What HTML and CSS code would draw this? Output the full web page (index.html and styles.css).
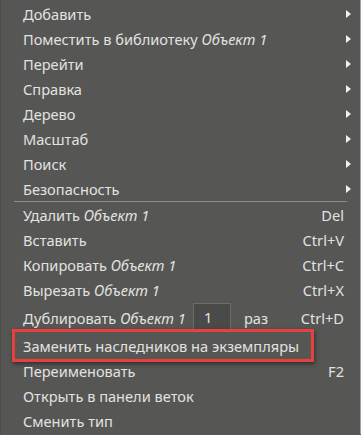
FILE: index.html
```html
<!DOCTYPE html>
<html lang="ru">
<head>
  <meta charset="UTF-8">
  <title>Контекстное меню</title>
  <link rel="stylesheet" href="styles.css">
</head>
<body>

  <div class="menu">
    <div class="item"><span class="label">Добавить</span><span class="arrow"></span></div>
    <div class="item"><span class="label">Поместить в библиотеку <i>Объект 1</i></span><span class="arrow"></span></div>
    <div class="item"><span class="label">Перейти</span><span class="arrow"></span></div>
    <div class="item"><span class="label">Справка</span><span class="arrow"></span></div>
    <div class="item"><span class="label">Дерево</span><span class="arrow"></span></div>
    <div class="item"><span class="label">Масштаб</span><span class="arrow"></span></div>
    <div class="item"><span class="label">Поиск</span><span class="arrow"></span></div>
    <div class="item"><span class="label">Безопасность</span><span class="arrow"></span></div>

    <div class="separator"></div>

    <div class="item"><span class="label">Удалить <i>Объект 1</i></span><span class="key">Del</span></div>
    <div class="item"><span class="label">Вставить</span><span class="key">Ctrl+V</span></div>
    <div class="item"><span class="label">Копировать <i>Объект 1</i></span><span class="key">Ctrl+C</span></div>
    <div class="item"><span class="label">Вырезать <i>Объект 1</i></span><span class="key">Ctrl+X</span></div>
    <div class="item item-dup">
      <span class="label">Дублировать <i>Объект 1</i></span>
      <span class="count">1</span>
      <span class="times">раз</span>
      <span class="key">Ctrl+D</span>
    </div>
    <div class="item highlighted"><span class="label">Заменить наследников на экземпляры</span><span class="mark"></span></div>
    <div class="item"><span class="label">Переименовать</span><span class="key">F2</span></div>
    <div class="item"><span class="label">Открыть в панели веток</span></div>
    <div class="item"><span class="label">Сменить тип</span></div>
  </div>

</body>
</html>
```

FILE: styles.css
```css
body { margin: 0; background: #565654; font-family: "Noto Sans", "Open Sans", sans-serif; }
.menu { height: 434px; padding-top: 1px; background: #565654; border-right: 1px solid #a2a2a2; border-left: 1px solid #4c4c4a; box-sizing: border-box; color: #e2e2e0; font-size: 14.6px; }
.item { position: relative; display: flex; align-items: center; height: 25px; padding: 0 16px 0 22px; }
.label { flex: 1; white-space: nowrap; }
.label i { font-style: italic; }
.arrow { width: 0; height: 0; margin-right: -7px; border-top: 4px solid transparent; border-bottom: 4px solid transparent; border-left: 5px solid #f0f0ee; }
.key { text-align: right; }
.separator { height: 1px; margin: 0 13px 0 13px; background: #8c8c8a; }
.item-dup { height: 31px; }
.item-dup .label { flex: none; width: 170px; }
.count { box-sizing: border-box; width: 38px; height: 29px; padding: 3px 0 0 10px; background: #4a4a48; border: 1px solid #6c6c6a; }
.times { flex: 1; padding-left: 13px; }
.mark { position: absolute; left: 11px; top: -4px; width: 302px; height: 33px; box-sizing: border-box; border: 3px solid #e8403e; box-shadow: 1px 2px 4px rgba(0, 0, 0, 0.45); }
```
